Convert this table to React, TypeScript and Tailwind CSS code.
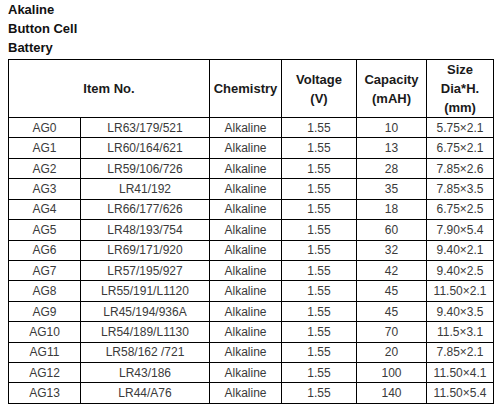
const rows: [string, string, string, string, string, string][] = [
  ["AG0", "LR63/179/521", "Alkaline", "1.55", "10", "5.75×2.1"],
  ["AG1", "LR60/164/621", "Alkaline", "1.55", "13", "6.75×2.1"],
  ["AG2", "LR59/106/726", "Alkaline", "1.55", "28", "7.85×2.6"],
  ["AG3", "LR41/192", "Alkaline", "1.55", "35", "7.85×3.5"],
  ["AG4", "LR66/177/626", "Alkaline", "1.55", "18", "6.75×2.5"],
  ["AG5", "LR48/193/754", "Alkaline", "1.55", "60", "7.90×5.4"],
  ["AG6", "LR69/171/920", "Alkaline", "1.55", "32", "9.40×2.1"],
  ["AG7", "LR57/195/927", "Alkaline", "1.55", "42", "9.40×2.5"],
  ["AG8", "LR55/191/L1120", "Alkaline", "1.55", "45", "11.50×2.1"],
  ["AG9", "LR45/194/936A", "Alkaline", "1.55", "45", "9.40×3.5"],
  ["AG10", "LR54/189/L1130", "Alkaline", "1.55", "70", "11.5×3.1"],
  ["AG11", "LR58/162 /721", "Alkaline", "1.55", "20", "7.85×2.1"],
  ["AG12", "LR43/186", "Alkaline", "1.55", "100", "11.50×4.1"],
  ["AG13", "LR44/A76", "Alkaline", "1.55", "140", "11.50×5.4"],
];

const th = "border border-black p-0 text-center align-middle font-bold text-[13px] leading-[19px] text-[#1a1a1a]";
const td = "border border-black p-0 text-center align-middle text-[12px] leading-[18px] text-[#3a3a3a]";

export default function App() {
  return (
    <div className="w-[502px] h-[405px] overflow-hidden bg-white font-['Liberation_Sans',Arial,sans-serif]">
      <div className="pl-[8px] text-[13px] font-bold leading-[19px] text-[#111]">
        <div>Akaline</div>
        <div>Button Cell</div>
        <div>Battery</div>
      </div>
      <table className="ml-[8px] mt-[2px] w-[485px] table-fixed border-collapse">
        <colgroup>
          <col className="w-[72px]" />
          <col className="w-[129px]" />
          <col className="w-[72px]" />
          <col className="w-[75px]" />
          <col className="w-[70px]" />
          <col className="w-[67px]" />
        </colgroup>
        <thead>
          <tr className="h-[58px]">
            <th colSpan={2} className={th}>Item No.</th>
            <th className={th}>Chemistry</th>
            <th className={th}>
              Voltage
              <br />
              (V)
            </th>
            <th className={th}>
              Capacity
              <br />
              (mAH)
            </th>
            <th className={th}>
              Size
              <br />
              Dia*H.
              <br />
              (mm)
            </th>
          </tr>
        </thead>
        <tbody>
          {rows.map((r) => (
            <tr key={r[0]} className="h-[20.43px]">
              {r.map((cell, i) => (
                <td key={i} className={td}>
                  {cell}
                </td>
              ))}
            </tr>
          ))}
        </tbody>
      </table>
    </div>
  );
}
